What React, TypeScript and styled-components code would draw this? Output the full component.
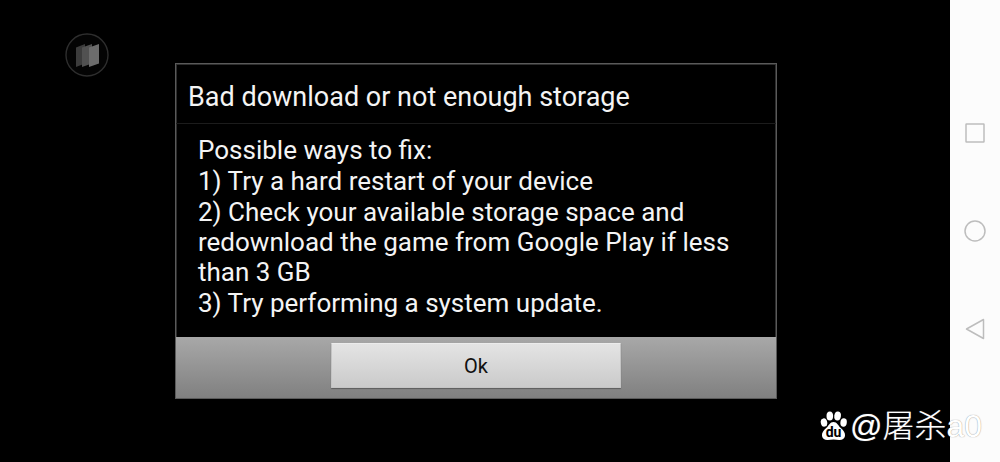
import React from "react";
import styled, { createGlobalStyle } from "styled-components";

const GlobalStyle = createGlobalStyle`
  *, *::before, *::after { box-sizing: border-box; }
  body {
    margin: 0;
    background: #000;
    color: #f4f4f4;
    font-family: Roboto, "Noto Sans CJK SC", sans-serif;
  }
`;

const Screen = styled.div`
  position: relative;
  display: flex;
  min-height: 100vh;
  overflow: hidden;
`;

const Stage = styled.main`
  position: relative;
  flex: 1;
  min-width: 0;
  display: flex;
  align-items: center;
  justify-content: center;
  padding-left: 2px;
  background: #000;
`;

const FloatingButton = styled.button`
  position: absolute;
  top: 33px;
  left: 65px;
  width: 44px;
  height: 44px;
  padding: 0;
  border: 0;
  background: none;
  svg { display: block; }
`;

const Dialog = styled.section`
  width: 602px;
  max-width: 100%;
  border: 1px solid #5a5a5a;
  background: #000;
  box-shadow: inset 0 0 0 1px #2e2e2e;
`;

const Title = styled.h1`
  margin: 0;
  padding: 18px 12px 10px;
  border-bottom: 1px solid #1c1c1c;
  font-size: 27px;
  line-height: 31px;
  font-weight: 400;
`;

const Message = styled.div`
  display: flex;
  flex-direction: column;
  gap: 1px;
  padding: 11px 22px 19px;
  font-size: 26px;
  line-height: 30px;
  p { margin: 0; }
`;

const Actions = styled.footer`
  display: flex;
  justify-content: center;
  padding: 6px 16px 10px;
  background: linear-gradient(#a8a8a8, #808080);
`;

const ActionButton = styled.button`
  width: 290px;
  height: 45px;
  padding: 0;
  border: 1px solid #c4c4c4;
  border-top-color: #ececec;
  border-radius: 1px;
  background: linear-gradient(#e4e4e4, #cacaca);
  box-shadow: 0 1px 1px #5c5c5c;
  color: #111;
  font: inherit;
  font-size: 20px;
`;

const NavBar = styled.nav`
  width: 50px;
  display: flex;
  flex-direction: column;
  align-items: center;
  justify-content: center;
  gap: 74px;
  background: #fcfcfc;
`;

const NavButton = styled.button`
  width: 24px;
  height: 24px;
  padding: 0;
  border: 0;
  background: none;
  svg {
    display: block;
    fill: none;
    stroke: #bdbdbd;
    stroke-width: 1.5;
    stroke-linejoin: round;
  }
`;

const Watermark = styled.div`
  position: absolute;
  right: 18px;
  bottom: 16px;
  display: flex;
  align-items: center;
  gap: 2px;
  color: #fff;
  font-family: "Liberation Sans", "Noto Sans CJK SC", sans-serif;
  font-size: 32px;
  font-weight: 300;
  line-height: 40px;
  white-space: nowrap;
  text-shadow: 0 0 1px #7a7a7a;
`;

const PawText = styled.text`
  font: 700 14px Roboto, sans-serif;
  fill: #000;
  text-shadow: none;
`;

const CardsIcon = () => (
  <svg width="44" height="44" viewBox="0 0 44 44" aria-hidden="true">
    <circle cx="22" cy="22" r="21" fill="#040404" stroke="#2e2e2e" strokeWidth="1.4" />
    <path d="M11 14.5 20 11v19.500l-9 3.500z" fill="#3c3c3c" />
    <path d="M17 14.500 27 11v19.500l-10 3.500z" fill="#515151" />
    <path d="M24 14.500 34 11v19.500l-10 3.500z" fill="#6c6c6c" />
  </svg>
);

const Paw = () => (
  <svg width="28" height="30" viewBox="0 0 28 30" aria-hidden="true">
    <g fill="#fff">
      <ellipse cx="4" cy="11.500" rx="3.200" ry="4.200" transform="rotate(-12 4 11.500)" />
      <ellipse cx="9.800" cy="5" rx="3.300" ry="4.500" />
      <ellipse cx="17.600" cy="5" rx="3.300" ry="4.500" transform="rotate(8 17.600 5)" />
      <ellipse cx="23.600" cy="11.500" rx="3.200" ry="4.200" transform="rotate(8 23.600 11.500)" />
      <path d="M13.500 11c3.500 0 4.800 3.700 7.300 6.100 2.600 2.500 4.700 4.700 4.200 7.900-.5 3-3 4.300-5.900 4.100-2-.1-3.600-.5-5.600-.5s-3.600.4-5.600.5c-2.900.2-5.400-1.100-5.900-4.100-.5-3.200 1.600-5.400 4.200-7.900C8.700 14.700 10 11 13.500 11z" />
    </g>
    <PawText x="13.500" y="26" textAnchor="middle">du</PawText>
  </svg>
);

export default function App() {
  return (
    <Screen>
      <GlobalStyle />
      <Stage>
        <FloatingButton type="button" aria-label="Game tools">
          <CardsIcon />
        </FloatingButton>
        <Dialog role="dialog" aria-labelledby="dialog-title">
          <Title id="dialog-title">Bad download or not enough storage</Title>
          <Message>
            <p>Possible ways to fix:</p>
            <p>1) Try a hard restart of your device</p>
            <p>2) Check your available storage space and redownload the game from Google Play if less than 3 GB</p>
            <p>3) Try performing a system update.</p>
          </Message>
          <Actions>
            <ActionButton type="button">Ok</ActionButton>
          </Actions>
        </Dialog>
      </Stage>
      <NavBar aria-label="System navigation">
        <NavButton type="button" aria-label="Recent apps">
          <svg width="24" height="24" viewBox="0 0 24 24"><rect x="3" y="3" width="18" height="18" rx="0.500" /></svg>
        </NavButton>
        <NavButton type="button" aria-label="Home">
          <svg width="24" height="24" viewBox="0 0 24 24"><circle cx="12" cy="12" r="10" /></svg>
        </NavButton>
        <NavButton type="button" aria-label="Back">
          <svg width="24" height="24" viewBox="0 0 24 24"><path d="M20.500 2.500v19L3.500 12z" /></svg>
        </NavButton>
      </NavBar>
      <Watermark>
        <Paw />
        <span>@屠杀a0</span>
      </Watermark>
    </Screen>
  );
}
